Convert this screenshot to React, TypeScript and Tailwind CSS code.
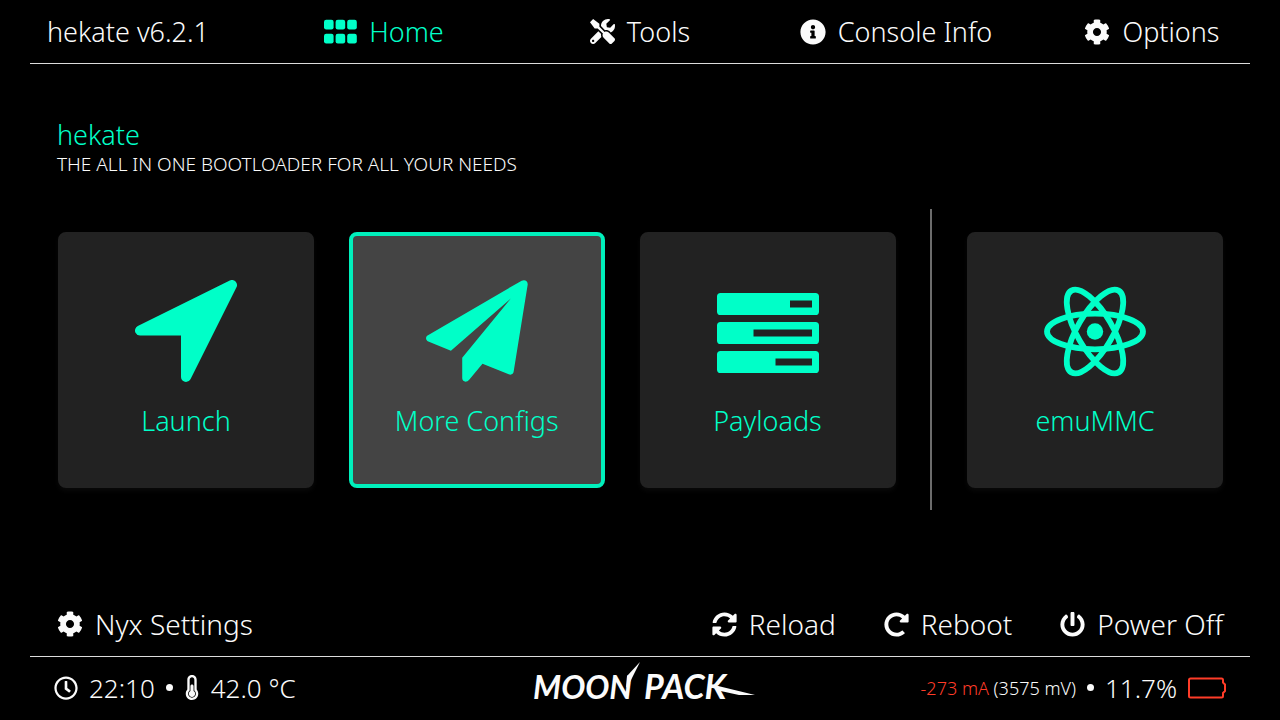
import type { ReactNode } from "react";
import {
  FaCog,
  FaInfoCircle,
  FaPowerOff,
  FaRedoAlt,
  FaRegClock,
  FaSyncAlt,
  FaThermometerHalf,
  FaTools,
} from "react-icons/fa";

function GridIcon() {
  return (
    <svg width="33" height="25" viewBox="0 0 33 25" fill="currentColor" aria-hidden="true">
      {[0, 11.6, 23.2].map((x) =>
        [0.8, 14.8].map((y) => <rect key={`${x}-${y}`} x={x} y={y} width="9.6" height="9.6" rx="2.2" />),
      )}
    </svg>
  );
}

function LaunchIcon() {
  return (
    <svg width="102" height="102" viewBox="0 0 102 102" fill="currentColor" stroke="currentColor" strokeWidth="10" strokeLinejoin="round" aria-hidden="true">
      <path d="M97 5 5 50.5H51V97Z" />
    </svg>
  );
}

function PlaneIcon() {
  return (
    <svg width="102" height="102" viewBox="260 182 307 307" fill="currentColor" aria-hidden="true">
      <path d="M548 184C557 180 567 184 566 196L524 457C523 465 517 469 509 466L430 434L390 482C383 491 370 490 369 478V416L515 238L335 395L267 367C258 363 258 352 266 348Z" />
    </svg>
  );
}

function PayloadsIcon() {
  return (
    <svg width="102" height="102" viewBox="0 0 102 102" fill="currentColor" fillRule="evenodd" aria-hidden="true">
      <path d="M3.6 13H98.4A3.6 3.6 0 0 1 102 16.6V31.4A3.6 3.6 0 0 1 98.4 35H3.6A3.6 3.6 0 0 1 0 31.4V16.6A3.6 3.6 0 0 1 3.6 13ZM73 20.500V27.500H95V20.500Z" />
      <path d="M3.6 42H98.4A3.6 3.6 0 0 1 102 45.6V60.4A3.6 3.6 0 0 1 98.4 64H3.6A3.6 3.6 0 0 1 0 60.4V45.6A3.6 3.6 0 0 1 3.6 42ZM36.500 49.500V56.500H95V49.500Z" />
      <path d="M3.6 71H98.4A3.6 3.6 0 0 1 102 74.6V89.4A3.6 3.6 0 0 1 98.4 93H3.6A3.6 3.6 0 0 1 0 89.4V74.6A3.6 3.6 0 0 1 3.6 71ZM58.500 78.500V85.500H95V78.500Z" />
    </svg>
  );
}

function AtomIcon() {
  return (
    <svg width="102" height="102" viewBox="0 0 102 102" fill="none" stroke="currentColor" strokeWidth="5.8" aria-hidden="true">
      <ellipse cx="51" cy="51.5" rx="48" ry="17.8" />
      <ellipse cx="51" cy="51.5" rx="47.2" ry="17.8" transform="rotate(60 51 51.5)" />
      <ellipse cx="51" cy="51.5" rx="47.2" ry="17.8" transform="rotate(120 51 51.5)" />
      <circle cx="51" cy="51.5" r="8.2" fill="currentColor" stroke="none" />
    </svg>
  );
}

function BatteryIcon() {
  return (
    <svg width="38" height="22" viewBox="0 0 38 22" fill="none" stroke="currentColor" strokeWidth="2" strokeLinejoin="round" aria-hidden="true">
      <path d="M2.500 1.500H33.500Q35 1.500 35 3V5.500L37 7.500V14L35 16V19Q35 20.500 33.500 20.500H2.500Q1 20.500 1 19V3Q1 1.500 2.500 1.500Z" />
    </svg>
  );
}

function Logo() {
  return (
    <svg width="226" height="56" viewBox="0 -5 226 56" fill="currentColor" role="img" aria-label="Moon Pack">
      <text x="0" y="34" fontFamily="Lato, sans-serif" fontSize="32" fontWeight="700" fontStyle="italic">MOON</text>
      <text x="111" y="34" fontFamily="Lato, sans-serif" fontSize="34" fontWeight="700" fontStyle="italic">PACK</text>
      <path d="M107-3 94 11 93 23 97 17Z" />
      <path d="M181 20 222 30 206 30 183 25Z" />
    </svg>
  );
}

function NavItem({ icon, label, active = false }: { icon: ReactNode; label: string; active?: boolean }) {
  return (
    <a
      href="#"
      aria-current={active ? "page" : undefined}
      className={`flex items-center justify-center gap-3 whitespace-nowrap ${active ? "text-[#00ffc8]" : ""}`}
    >
      {icon}
      <span>{label}</span>
    </a>
  );
}

function Tile({ icon, label, active = false }: { icon: ReactNode; label: string; active?: boolean }) {
  return (
    <button
      type="button"
      className={`flex size-64 flex-col items-center rounded-lg border-4 pt-11 text-[#00ffc8] ${
        active ? "border-[#00f0bc] bg-[#444444]" : "border-[#222222] bg-[#222222] shadow-[0_3px_5px_#090909]"
      }`}
    >
      {icon}
      <span className="mt-[21px]">{label}</span>
    </button>
  );
}

function ActionButton({ icon, label }: { icon: ReactNode; label: string }) {
  return (
    <button type="button" className="flex items-center gap-3 whitespace-nowrap">
      {icon}
      <span>{label}</span>
    </button>
  );
}

export default function App() {
  return (
    <div className="flex min-h-screen flex-col bg-black font-['Noto_Sans',sans-serif] text-[27px] leading-9 font-light text-[#fbfbfb]">
      <header>
        <nav className="grid h-[63px] grid-cols-5 items-center">
          <span className="text-center">hekate v6.2.1</span>
          <NavItem active icon={<GridIcon />} label="Home" />
          <NavItem icon={<FaTools size={25} />} label="Tools" />
          <NavItem icon={<FaInfoCircle size={26} />} label="Console Info" />
          <NavItem icon={<FaCog size={26} />} label="Options" />
        </nav>
        <div className="mx-[30px] h-px bg-[#dcdcdc]" />
      </header>

      <main className="flex flex-1 flex-col px-[57px] pt-[53px]">
        <h1 className="text-[#00ffc8]">hekate</h1>
        <p className="text-[19px] leading-[22px]">THE ALL IN ONE BOOTLOADER FOR ALL YOUR NEEDS</p>
        <div className="mt-[34px] flex items-center justify-between pl-px">
          <Tile icon={<LaunchIcon />} label="Launch" />
          <Tile active icon={<PlaneIcon />} label="More Configs" />
          <Tile icon={<PayloadsIcon />} label="Payloads" />
          <div className="h-[301px] w-[2px] bg-[#6c6c6c]" />
          <Tile icon={<AtomIcon />} label="emuMMC" />
        </div>
      </main>

      <div className="flex h-16 items-center justify-between px-[57px] text-[28px]">
        <ActionButton icon={<FaCog size={26} />} label="Nyx Settings" />
        <div className="flex gap-12">
          <ActionButton icon={<FaSyncAlt size={25} />} label="Reload" />
          <ActionButton icon={<FaRedoAlt size={25} />} label="Reboot" />
          <ActionButton icon={<FaPowerOff size={25} />} label="Power Off" />
        </div>
      </div>

      <footer>
        <div className="mx-[30px] h-px bg-[#dcdcdc]" />
        <div className="grid h-[63px] grid-cols-[1fr_auto_1fr] items-center px-[54px] pb-0.5 text-[26px]">
          <div className="flex items-center gap-[11px]">
            <FaRegClock size={24} />
            <span>22:10</span>
            <span className="size-[7px] rounded-full bg-current" />
            <FaThermometerHalf size={25} className="w-4" />
            <span>42.0 °C</span>
          </div>
          <div className="pl-3">
            <Logo />
          </div>
          <div className="flex items-center justify-end gap-[11px]">
            <span className="text-[18px] leading-6">
              <span className="text-[#ff3c28]">-273 mA</span> (3575 mV)
            </span>
            <span className="size-[7px] rounded-full bg-current" />
            <span>11.7%</span>
            <span className="text-[#ff3c28]">
              <BatteryIcon />
            </span>
          </div>
        </div>
      </footer>
    </div>
  );
}
